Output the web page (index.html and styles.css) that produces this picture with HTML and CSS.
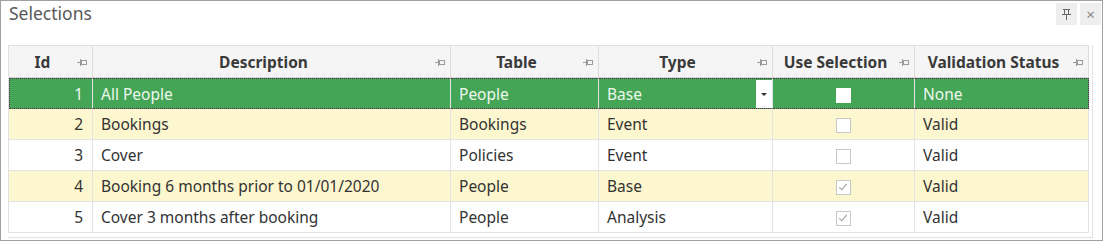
FILE: index.html
```html
<!DOCTYPE html>
<html>
<head>
    <title>Selections</title>
    <link rel="stylesheet" href="styles.css">
</head>
<body>
    <div class="panel">
        <div class="panel-header">
            <span class="panel-title">Selections</span>
            <div class="panel-buttons">
                <span class="panel-btn">
                    <svg width="9" height="11" viewBox="0 0 9 11"><path d="M1 0.5H8M2.5 1V5.5M6.5 1V5.5M0 5.5H9M4.5 6V11" stroke="#666" fill="none"/></svg>
                </span>
                <span class="panel-btn close">&#215;</span>
            </div>
        </div>
        <div class="grid-wrap">
            <table class="grid">
                <colgroup>
                    <col style="width:84px">
                    <col style="width:358px">
                    <col style="width:148px">
                    <col style="width:174px">
                    <col style="width:142px">
                    <col style="width:174px">
                </colgroup>
                <thead>
                    <tr>
                        <th><span class="th-text">Id</span><span class="pin"></span></th>
                        <th><span class="th-text">Description</span><span class="pin"></span></th>
                        <th><span class="th-text">Table</span><span class="pin"></span></th>
                        <th><span class="th-text">Type</span><span class="pin"></span></th>
                        <th><span class="th-text">Use Selection</span><span class="pin"></span></th>
                        <th><span class="th-text">Validation Status</span><span class="pin"></span></th>
                    </tr>
                </thead>
                <tbody>
                    <tr class="selected">
                        <td class="num">1</td>
                        <td>All People</td>
                        <td>People</td>
                        <td class="combo"><div class="combo-inner"><span>Base</span><span class="drop-btn"></span></div></td>
                        <td class="check"><span class="box"></span></td>
                        <td>None</td>
                    </tr>
                    <tr class="alt">
                        <td class="num">2</td>
                        <td>Bookings</td>
                        <td>Bookings</td>
                        <td>Event</td>
                        <td class="check"><span class="box"></span></td>
                        <td>Valid</td>
                    </tr>
                    <tr>
                        <td class="num">3</td>
                        <td>Cover</td>
                        <td>Policies</td>
                        <td>Event</td>
                        <td class="check"><span class="box"></span></td>
                        <td>Valid</td>
                    </tr>
                    <tr class="alt">
                        <td class="num">4</td>
                        <td>Booking 6 months prior to 01/01/2020</td>
                        <td>People</td>
                        <td>Base</td>
                        <td class="check"><span class="box checked"></span></td>
                        <td>Valid</td>
                    </tr>
                    <tr>
                        <td class="num">5</td>
                        <td>Cover 3 months after booking</td>
                        <td>People</td>
                        <td>Analysis</td>
                        <td class="check"><span class="box checked"></span></td>
                        <td>Valid</td>
                    </tr>
                </tbody>
            </table>
        </div>
    </div>
</body>
</html>
```

FILE: styles.css
```css
body {
    margin: 0;
    font-family: "Noto Sans", "Open Sans", sans-serif;
    background: #ffffff;
}
.panel {
    width: 1103px;
    height: 241px;
    box-sizing: border-box;
    border: 1px solid #a0a0a0;
    background: #ffffff;
}
.panel-header {
    display: flex;
    justify-content: space-between;
    height: 44px;
}
.panel-title {
    padding: 0 0 0 8px;
    font-size: 17.5px;
    line-height: 24px;
    color: #585858;
}
.panel-buttons {
    display: flex;
    gap: 3px;
    padding: 2px 1px 0 0;
    height: 22px;
}
.panel-btn {
    display: flex;
    align-items: center;
    justify-content: center;
    width: 21px;
    height: 22px;
    background: #eeeeee;
    color: #888888;
    font-size: 15px;
}
.grid-wrap {
    margin-left: 7px;
    width: 1084px;
    height: 192px;
    border-right: 1px solid #e2e2e2;
    border-bottom: 1px solid #e2e2e2;
}
.grid {
    width: 1080px;
    table-layout: fixed;
    border-collapse: separate;
    border-spacing: 0;
    border-top: 1px solid #e0e0e0;
    border-left: 1px solid #e0e0e0;
    font-size: 15.5px;
    color: #333333;
}
.grid th {
    position: relative;
    height: 31px;
    padding: 0 16px 0 0;
    background: #f5f5f5;
    border-right: 1px solid #dcdcdc;
    border-bottom: 1px solid #d4d4d4;
    font-weight: bold;
    color: #3a3a3a;
    text-align: center;
}
.pin {
    position: absolute;
    right: 6px;
    top: 13px;
    width: 9px;
    height: 7px;
    background:
        linear-gradient(#9a9a9a, #9a9a9a) 0 3px / 3px 1px no-repeat,
        linear-gradient(#9a9a9a, #9a9a9a) 3px 0 / 1px 7px no-repeat;
}
.pin::after {
    content: "";
    position: absolute;
    left: 4px;
    top: 1px;
    width: 4px;
    height: 3px;
    border: 1px solid #9a9a9a;
}
.grid td {
    height: 31px;
    box-sizing: border-box;
    padding: 0 8px;
    border-right: 1px solid #e3e3e3;
    border-bottom: 1px solid #e3e3e3;
    white-space: nowrap;
}
.grid td.num {
    text-align: right;
    padding-right: 9px;
}
.alt td {
    background: #fdf7cf;
}
.selected td {
    height: 31px;
    background: #45a556;
    color: #eef8ee;
    border-top: 1px dotted #5b2a55;
    border-bottom: 1px dotted #5b2a55;
}
.selected td:first-child {
    border-left: 1px dotted #5b2a55;
}
.selected td:last-child {
    border-right: 1px dotted #5b2a55;
}
.grid td.combo {
    padding-right: 0;
}
.combo-inner {
    display: flex;
    align-items: center;
    justify-content: space-between;
    height: 28px;
}
.drop-btn {
    width: 16px;
    height: 28px;
    background: #ffffff;
    position: relative;
}
.drop-btn::after {
    content: "";
    position: absolute;
    left: 5px;
    top: 13px;
    border-left: 3px solid transparent;
    border-right: 3px solid transparent;
    border-top: 3px solid #333333;
}
.grid td.check {
    text-align: center;
    padding: 0;
}
.box {
    display: inline-block;
    vertical-align: middle;
    width: 13px;
    height: 13px;
    border: 1px solid #c8c8c8;
    background: #ffffff;
    position: relative;
}
.selected .box {
    border-color: #ffffff;
}
.box.checked::after {
    content: "";
    position: absolute;
    left: 4px;
    top: 1px;
    width: 3px;
    height: 7px;
    border-right: 1px solid #9a9a9a;
    border-bottom: 1px solid #9a9a9a;
    transform: rotate(40deg);
}
```
